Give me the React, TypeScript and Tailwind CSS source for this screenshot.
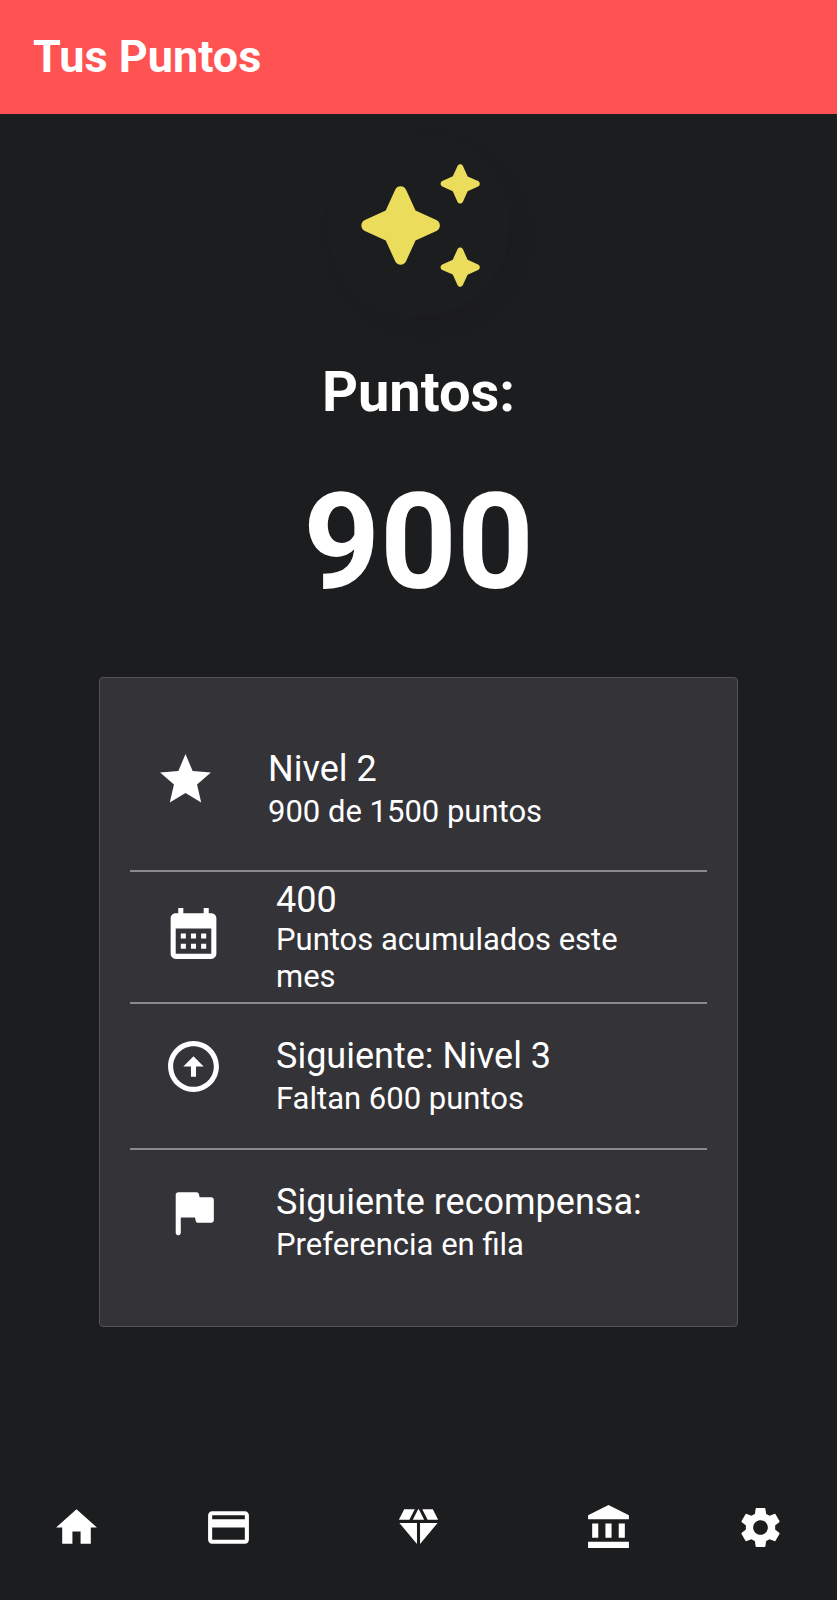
import React from "react";

type IconProps = { d: string; className: string };

function Icon({ d, className }: IconProps) {
  return (
    <svg viewBox="0 0 24 24" fill="currentColor" aria-hidden="true" className={className}>
      <path d={d} />
    </svg>
  );
}

const icons = {
  sparkles:
    "M19.46 8l.79-1.75L22 5.46c.39-.18.39-.73 0-.91l-1.75-.79L19.46 2c-.18-.39-.73-.39-.91 0l-.79 1.75-1.76.79c-.39.18-.39.73 0 .91l1.75.79.79 1.76c.18.39.74.39.92 0zM11.5 9.5L9.91 6c-.35-.78-1.47-.78-1.82 0L6.5 9.5 3 11.09c-.78.36-.78 1.47 0 1.82l3.5 1.59L8.09 18c.36.78 1.47.78 1.82 0l1.59-3.5 3.5-1.59c.78-.36.78-1.47 0-1.82L11.5 9.5zm7.04 6.5l-.79 1.75-1.75.79c-.39.18-.39.73 0 .91l1.75.79.79 1.76c.18.39.73.39.91 0l.79-1.75 1.76-.79c.39-.18.39-.73 0-.91l-1.75-.79-.79-1.76c-.18-.39-.74-.39-.92 0z",
  star: "M12 17.27L18.18 21l-1.64-7.03L22 9.24l-7.19-.61L12 2 9.19 8.63 2 9.24l5.46 4.73L5.82 21z",
  calendar:
    "M19 4h-1V2h-2v2H8V2H6v2H5c-1.11 0-1.99.9-1.99 2L3 20c0 1.1.89 2 2 2h14c1.1 0 2-.9 2-2V6c0-1.1-.9-2-2-2zm0 16H5V10h14v10zM9 14H7v-2h2v2zm4 0h-2v-2h2v2zm4 0h-2v-2h2v2zm-8 4H7v-2h2v2zm4 0h-2v-2h2v2zm4 0h-2v-2h2v2z",
  arrowUp:
    "M12 20c-4.41 0-8-3.59-8-8s3.59-8 8-8 8 3.59 8 8-3.59 8-8 8m0 2c5.52 0 10-4.48 10-10S17.52 2 12 2 2 6.48 2 12s4.48 10 10 10zm-1-10v4h2v-4h3l-4-4-4 4h3z",
  flag: "M14.4 6l-.24-1.2c-.09-.46-.5-.8-.98-.8H6c-.55 0-1 .45-1 1v15c0 .55.45 1 1 1s1-.45 1-1v-6h5.6l.24 1.2c.09.47.5.8.98.8H19c.55 0 1-.45 1-1V7c0-.55-.45-1-1-1h-4.6z",
  home: "M10 20v-6h4v6h5v-8h3L12 3 2 12h3v8z",
  card: "M20 4H4c-1.11 0-1.99.89-1.99 2L2 18c0 1.11.89 2 2 2h16c1.11 0 2-.89 2-2V6c0-1.11-.89-2-2-2zm0 14H4v-6h16v6zm0-10H4V6h16v2z",
  diamond:
    "M12.16 3h-.32L9.21 8.25h5.58L12.16 3zM16.46 8.25h5.16L19 3h-5.16l2.62 5.25zM21.38 9.75h-8.63V20.1l8.63-10.35zM11.25 20.1V9.75H2.62l8.63 10.35zM7.54 8.25L10.16 3H5L2.38 8.25h5.16z",
  bank: "M4 10h3v7H4zM10.5 10h3v7h-3zM2 19h20v3H2zM17 10h3v7h-3zM12 1L2 6v2h20V6z",
  settings:
    "M19.14 12.94c.04-.3.06-.61.06-.94 0-.32-.02-.64-.07-.94l2.03-1.58c.18-.14.23-.41.12-.61l-1.92-3.32c-.12-.22-.37-.29-.59-.22l-2.39.96c-.5-.38-1.03-.7-1.62-.94l-.36-2.54c-.04-.24-.24-.41-.48-.41h-3.84c-.24 0-.43.17-.47.41l-.36 2.54c-.59.24-1.13.57-1.62.94l-2.39-.96c-.22-.08-.47 0-.59.22L2.74 8.87c-.12.21-.08.47.12.61l2.03 1.58c-.05.3-.09.63-.09.94s.02.64.07.94l-2.03 1.58c-.18.14-.23.41-.12.61l1.92 3.32c.12.22.37.29.59.22l2.39-.96c.5.38 1.03.7 1.62.94l.36 2.54c.05.24.24.41.48.41h3.84c.24 0 .44-.17.47-.41l.36-2.54c.59-.24 1.13-.56 1.62-.94l2.39.96c.22.08.47 0 .59-.22l1.92-3.32c.12-.22.07-.47-.12-.61l-2.01-1.58zM12 15.6c-1.98 0-3.6-1.62-3.6-3.6s1.62-3.6 3.6-3.6 3.6 1.62 3.6 3.6-1.62 3.6-3.6 3.6z",
};

const rows = [
  { icon: icons.star, title: "Nivel 2", text: "900 de 1500 puntos", row: "pl-[25px] pt-9 pb-10", iconPad: "pt-px", gap: "gap-[3px]" },
  { icon: icons.calendar, title: "400", text: "Puntos acumulados este mes", row: "pl-[33px] py-[7px]", iconPad: "pt-6", gap: "gap-0" },
  { icon: icons.arrowUp, title: "Siguiente: Nivel 3", text: "Faltan 600 puntos", row: "pl-[33px] py-[31px]", iconPad: "pt-px", gap: "gap-[3px]" },
  { icon: icons.flag, title: "Siguiente recompensa:", text: "Preferencia en fila", row: "pl-[33px] py-[31px]", iconPad: "pt-px", gap: "gap-[3px]" },
];

const tabs = [
  { label: "Inicio", icon: icons.home },
  { label: "Tarjetas", icon: icons.card },
  { label: "Puntos", icon: icons.diamond },
  { label: "Banco", icon: icons.bank },
  { label: "Ajustes", icon: icons.settings },
];

export default function App() {
  return (
    <div className="flex min-h-screen flex-col bg-[#1c1d1f] font-['Roboto',sans-serif] text-white">
      <header className="bg-[#ff5252] px-[33px] py-[30px]">
        <h1 className="text-[45px] leading-[54px] font-bold">Tus Puntos</h1>
      </header>

      <main className="flex flex-1 flex-col">
        <section className="flex flex-col items-center pt-5">
          <div className="rounded-full bg-[#1c1d1f] p-5 shadow-[10px_10px_24px_rgba(0,0,0,0.05)]">
            <Icon d={icons.sparkles} className="size-[143px] text-[#ebdc5c]" />
          </div>
          <h2 className="mt-[42px] text-[56px] leading-[66px] font-bold">Puntos:</h2>
          <p className="mt-10 text-[134px] leading-[156px] font-bold">900</p>
        </section>

        <ul className="mx-[99px] mt-14 divide-y-2 divide-[#8a898c] rounded border border-[#535255] bg-[#343338] px-[30px] pt-[34px] pb-8">
          {rows.map((r) => (
            <li key={r.title} className={`flex items-start gap-[52px] pr-[33px] ${r.row}`}>
              <div className={`shrink-0 ${r.iconPad}`}>
                <Icon d={r.icon} className="size-[61px]" />
              </div>
              <div className={`flex min-w-0 flex-1 flex-col ${r.gap}`}>
                <p className="text-[36px] leading-[42px]">{r.title}</p>
                <p className="text-[31px] leading-[37px]">{r.text}</p>
              </div>
            </li>
          ))}
        </ul>
      </main>

      <nav aria-label="Principal" className="grid grid-cols-[2fr_2fr_3fr_2fr_2fr] pb-12">
        {tabs.map((t) => (
          <button key={t.label} type="button" aria-label={t.label} className="flex justify-center">
            <Icon d={t.icon} className="size-[49px]" />
          </button>
        ))}
      </nav>
    </div>
  );
}
